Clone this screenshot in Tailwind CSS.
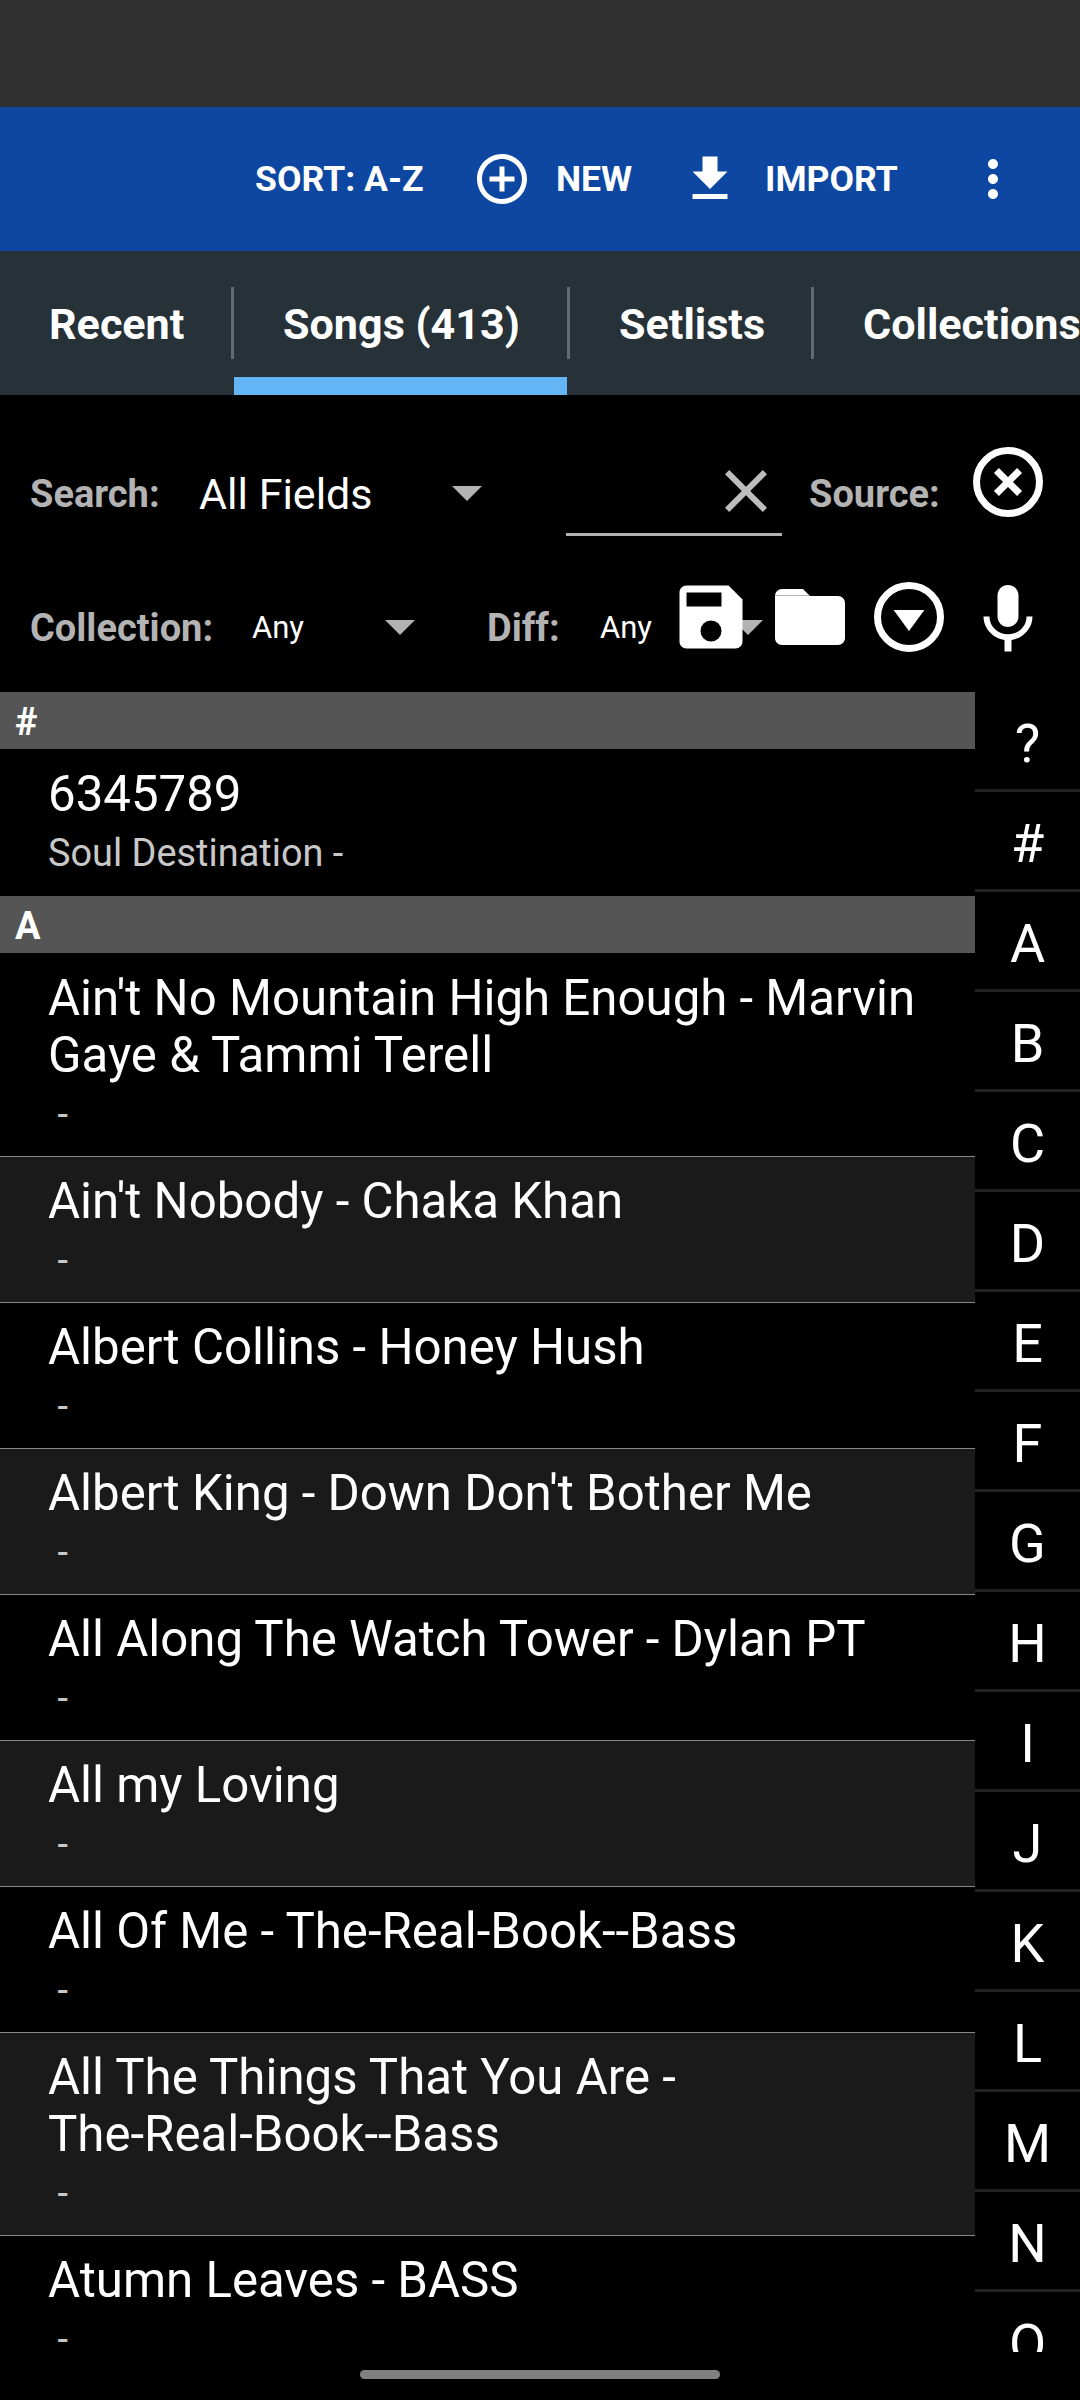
<!DOCTYPE html>
<html lang="en">
<head>
    <meta charset="UTF-8">
    <meta name="viewport" content="width=device-width, initial-scale=1.0">
    <title>Songs</title>
    <script src="https://cdn.jsdelivr.net/npm/@tailwindcss/browser@4"></script>
</head>
<body class="bg-black">
    <div class="w-[1080px] h-[2400px] flex flex-col overflow-hidden bg-black text-white font-[Roboto,sans-serif]">
        <!-- Status bar -->
        <div class="h-[107px] shrink-0 bg-[#303030]"></div>

        <!-- Action bar -->
        <header class="h-36 shrink-0 bg-[#0d47a1] flex items-center pl-[255px] text-[35.6px] font-bold whitespace-nowrap">
            <span class="w-[217px] pt-[2px]">SORT: A-Z</span>
            <svg class="w-[60px] h-[60px]" viewBox="0 0 24 24" fill="currentColor"><path d="M13 7h-2v4H7v2h4v4h2v-4h4v-2h-4V7zm-1-5C6.48 2 2 6.48 2 12s4.480 10 10 10 10-4.480 10-10S17.520 2 12 2zm0 18c-4.410 0-8-3.590-8-8s3.590-8 8-8 8 3.590 8 8-3.590 8-8 8z"/></svg>
            <span class="w-[124px] ml-[24px] pt-[2px]">NEW</span>
            <svg class="w-[60px] h-[60px]" viewBox="0 0 24 24" fill="currentColor"><path d="M19 9h-4V3H9v6H5l7 7 7-7zM5 18v2h14v-2H5z"/></svg>
            <span class="w-[198px] ml-[25px] pt-[2px]">IMPORT</span>
            <svg class="w-[60px] h-[60px]" viewBox="0 0 24 24" fill="currentColor"><path d="M12 8c1.100 0 2-.9 2-2s-.9-2-2-2-2 .9-2 2 .9 2 2 2zm0 2c-1.100 0-2 .9-2 2s.9 2 2 2 2-.9 2-2-.9-2-2-2zm0 6c-1.100 0-2 .9-2 2s.9 2 2 2 2-.9 2-2-.9-2-2-2z"/></svg>
        </header>

        <!-- Tabs -->
        <nav class="h-36 shrink-0 bg-[#263238] flex text-[43.1px] font-bold leading-[148px] whitespace-nowrap overflow-hidden">
            <div class="w-[231px] shrink-0 pl-[49px]">Recent</div>
            <div class="w-[3px] h-[72px] mt-9 shrink-0 bg-[#626b70]"></div>
            <div class="w-[333px] h-36 shrink-0 pl-[49px] border-b-[18px] border-[#64b5f6]">Songs (413)</div>
            <div class="w-[3px] h-[72px] mt-9 shrink-0 bg-[#626b70]"></div>
            <div class="w-[241px] shrink-0 pl-[49px]">Setlists</div>
            <div class="w-[3px] h-[72px] mt-9 shrink-0 bg-[#626b70]"></div>
            <div class="shrink-0 pl-[49px]">Collections</div>
        </nav>

        <!-- Filters -->
        <section class="relative h-[297px] shrink-0 pt-[40px] whitespace-nowrap">
            <div class="flex items-center h-[118px] pl-[30px]">
                <span class="w-[169px] text-[38px] font-bold text-[#b3b3b3]">Search:</span>
                <span class="w-[253px] text-[43px]">All Fields</span>
                <svg class="w-[30px] h-[15px] mb-px" viewBox="0 0 30 15" fill="#b3b3b3"><path d="M0 0h30L15 15z"/></svg>
                <div class="w-[216px] h-[92px] mb-[8px] pt-[11px] ml-[84px] border-b-[3px] border-[#b3b3b3] flex justify-end items-start">
                    <svg class="w-[72px] h-[72px]" viewBox="0 0 24 24" fill="#bdbdbd"><path d="M19 6.410L17.590 5 12 10.590 6.410 5 5 6.410 10.590 12 5 17.590 6.410 19 12 13.410 17.590 19 19 17.590 13.410 12z"/></svg>
                </div>
                <span class="w-[157px] ml-[27px] text-[38px] font-bold text-[#b3b3b3]">Source:</span>
                <svg class="w-[84px] h-[84px] mb-[24px]" viewBox="0 0 24 24" fill="none" stroke="#fff" stroke-width="2"><circle cx="12" cy="12" r="9"/><path d="M8.700 8.700l6.600 6.600M15.300 8.700l-6.600 6.600"/></svg>
            </div>
            <div class="flex items-center h-[60px] mt-[44px] -mb-[20px] pt-[2px] pl-[30px]">
                <span class="w-[222px] text-[38px] font-bold text-[#b3b3b3]">Collection:</span>
                <span class="w-[133px] text-[31px]">Any</span>
                <svg class="w-[30px] h-[15px] mb-px" viewBox="0 0 30 15" fill="#b3b3b3"><path d="M0 0h30L15 15z"/></svg>
                <span class="w-[113px] ml-[72px] text-[38px] font-bold text-[#b3b3b3]">Diff:</span>
                <span class="w-[133px] text-[31px]">Any</span>
                <svg class="w-[30px] h-[15px] mb-px" viewBox="0 0 30 15" fill="#b3b3b3"><path d="M0 0h30L15 15z"/></svg>
            </div>
            <!-- Toolbar floating over the difficulty dropdown -->
            <div class="absolute left-[669px] top-[180px] flex gap-[15px]">
                <svg class="w-[84px] h-[84px]" viewBox="0 0 24 24"><path fill="#fff" d="M17 3H5c-1.110 0-2 .9-2 2v14c0 1.100.89 2 2 2h14c1.100 0 2-.9 2-2V7l-4-4z"/><path d="M5 5h10v4H5z"/><circle cx="12" cy="16" r="3"/></svg>
                <svg class="w-[84px] h-[84px]" viewBox="0 0 24 24"><path fill="#fff" d="M10 4H4c-1.100 0-1.990.9-1.990 2L2 18c0 1.100.9 2 2 2h16c1.100 0 2-.9 2-2V8c0-1.100-.9-2-2-2h-8l-2-2z"/><path stroke="#aaa" stroke-width=".25" d="M2 5.850h9.700"/></svg>
                <svg class="w-[84px] h-[84px]" viewBox="0 0 24 24"><circle cx="12" cy="12" r="9" fill="none" stroke="#fff" stroke-width="2"/><path fill="#fff" d="M7.600 10h8.800L12 16z"/></svg>
                <svg class="w-[84px] h-[84px] mt-[3px]" viewBox="0 0 24 24" fill="#fff"><path d="M12 14c1.660 0 2.990-1.340 2.990-3L15 5c0-1.660-1.340-3-3-3S9 3.340 9 5v6c0 1.660 1.340 3 3 3zm5.300-3c0 3-2.540 5.100-5.300 5.100S6.700 14 6.700 11H5c0 3.410 2.720 6.230 6 6.720V21h2v-3.280c3.280-.48 6-3.300 6-6.720h-1.700z"/></svg>
            </div>
        </section>

        <!-- Song list and letter index -->
        <main class="h-[1660px] shrink-0 flex overflow-hidden">
            <div id="songs" class="w-[975px] shrink-0"></div>
            <div id="index" class="w-[105px] shrink-0 text-center text-[54px] leading-[97px]"></div>
        </main>

        <!-- Gesture bar -->
        <div class="h-12 shrink-0 flex justify-center pt-[18px]">
            <div class="w-[360px] h-[9px] rounded-full bg-[#808080]"></div>
        </div>
    </div>

    <script>
        const sections = [
            { letter: '#', songs: [['6345789', 'Soul Destination -']] },
            { letter: 'A', songs: [
                ["Ain't No Mountain High Enough - Marvin<br>Gaye & Tammi Terell", ' -'],
                ["Ain't Nobody - Chaka Khan", ' -'],
                ['Albert Collins - Honey Hush', ' -'],
                ["Albert King - Down Don't Bother Me", ' -'],
                ['All Along The Watch Tower - Dylan PT', ' -'],
                ['All my Loving', ' -'],
                ['All Of Me - The-Real-Book--Bass', ' -'],
                ['All The Things That You Are -<br>The-Real-Book--Bass', ' -'],
                ['Atumn Leaves - BASS', ' -'],
            ] },
        ];

        const rowStyle = i => i === 0
            ? 'pt-[17px]'
            : i % 2 ? 'pt-[16px] border-t border-[#888] bg-[#1a1a1a]' : 'pt-[16px] border-t border-[#888]';

        document.getElementById('songs').innerHTML = sections.map(section => `
            <div class="h-[57px] pl-[15px] bg-[#555] text-[38px] font-bold leading-[60px]">${section.letter}</div>
            <div class="pb-px">
            ${section.songs.map(([title, artist], i) => `
                <div class="pl-12 pb-[19px] ${rowStyle(i)} whitespace-pre"><div class="text-[49.2px] leading-[57px]">${title}</div><div class="mt-[8px] text-[37.9px] leading-[45px] text-[#c8c8c8]">${artist}</div></div>
            `).join('')}
            </div>
        `).join('');

        document.getElementById('index').innerHTML = [...'?#ABCDEFGHIJKLMNO'].map(letter => `
            <div class="h-[100px] pt-[3px] border-b-[3px] border-[#222]">${letter}</div>
        `).join('');
    </script>
</body>
</html>
